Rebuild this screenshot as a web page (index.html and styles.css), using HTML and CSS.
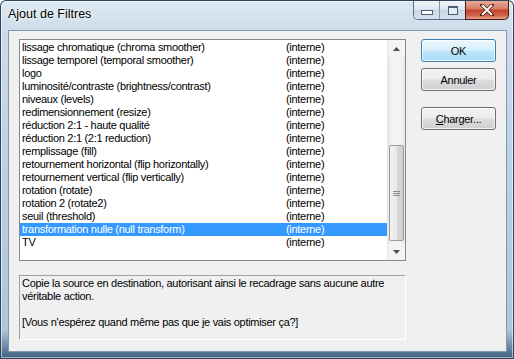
FILE: index.html
```
<!DOCTYPE html>
<html lang="fr">
<head>
    <meta charset="UTF-8">
    <title>Ajout de Filtres</title>
    <link rel="stylesheet" href="styles.css">
</head>
<body>
    <div class="window">
        <div class="titlebar">
            <div class="title">Ajout de Filtres</div>
            <div class="caption-buttons">
                <div class="cap-group">
                    <div class="cap-btn cap-min"><span class="min-glyph"></span></div>
                    <div class="cap-btn cap-max"><span class="max-glyph"></span></div>
                </div>
                <div class="cap-close">
                    <svg width="14" height="12" viewBox="0 0 14 12">
                        <path d="M2 1 L12 11 M12 1 L2 11" stroke="#3d1a14" stroke-width="3.4" stroke-linecap="square"/>
                        <path d="M2 1 L12 11 M12 1 L2 11" stroke="#ffffff" stroke-width="2"/>
                    </svg>
                </div>
            </div>
        </div>

        <div class="client">
            <div class="main-col">
                <div class="listbox">
                    <div class="list-items">
                        <div class="row"><span class="name">lissage chromatique (chroma smoother)</span><span class="src">(interne)</span></div>
                        <div class="row"><span class="name">lissage temporel (temporal smoother)</span><span class="src">(interne)</span></div>
                        <div class="row"><span class="name">logo</span><span class="src">(interne)</span></div>
                        <div class="row"><span class="name">luminosité/contraste (brightness/contrast)</span><span class="src">(interne)</span></div>
                        <div class="row"><span class="name">niveaux (levels)</span><span class="src">(interne)</span></div>
                        <div class="row"><span class="name">redimensionnement (resize)</span><span class="src">(interne)</span></div>
                        <div class="row"><span class="name">réduction 2:1 - haute qualité</span><span class="src">(interne)</span></div>
                        <div class="row"><span class="name">réduction 2:1 (2:1 reduction)</span><span class="src">(interne)</span></div>
                        <div class="row"><span class="name">remplissage (fill)</span><span class="src">(interne)</span></div>
                        <div class="row"><span class="name">retournement horizontal (flip horizontally)</span><span class="src">(interne)</span></div>
                        <div class="row"><span class="name">retournement vertical (flip vertically)</span><span class="src">(interne)</span></div>
                        <div class="row"><span class="name">rotation (rotate)</span><span class="src">(interne)</span></div>
                        <div class="row"><span class="name">rotation 2 (rotate2)</span><span class="src">(interne)</span></div>
                        <div class="row"><span class="name">seuil (threshold)</span><span class="src">(interne)</span></div>
                        <div class="row selected"><span class="name">transformation nulle (null transform)</span><span class="src">(interne)</span></div>
                        <div class="row"><span class="name">TV</span><span class="src">(interne)</span></div>
                    </div>
                    <div class="scrollbar">
                        <div class="sb-arrow">
                            <svg width="7" height="4" viewBox="0 0 7 4"><path d="M0 4 L3.5 0 L7 4 Z" fill="#4d4d4d"/></svg>
                        </div>
                        <div class="sb-track">
                            <div class="sb-space"></div>
                            <div class="sb-thumb">
                                <svg width="7" height="7" viewBox="0 0 7 7">
                                    <path d="M0 1.5 H7 M0 3.5 H7 M0 5.5 H7" stroke="#8a8a8a" stroke-width="1"/>
                                </svg>
                            </div>
                        </div>
                        <div class="sb-arrow">
                            <svg width="7" height="4" viewBox="0 0 7 4"><path d="M0 0 L7 0 L3.5 4 Z" fill="#4d4d4d"/></svg>
                        </div>
                    </div>
                </div>

                <div class="description">
                    <p>Copie la source en destination, autorisant ainsi le recadrage sans aucune autre véritable action.</p>
                    <p>[Vous n'espérez quand même pas que je vais optimiser ça?]</p>
                </div>
            </div>

            <div class="button-col">
                <button class="btn btn-default">OK</button>
                <button class="btn">Annuler</button>
                <button class="btn btn-spaced"><u>C</u>harger...</button>
            </div>
        </div>
    </div>
</body>
</html>
```

FILE: styles.css
```
html, body {
    margin: 0;
    padding: 0;
    background: #ffffff;
}
body {
    font-family: "Liberation Sans", Arial, sans-serif;
    font-size: 11px;
    color: #000000;
}
.window {
    width: 514px;
    height: 359px;
    box-sizing: border-box;
    display: flex;
    flex-direction: column;
    padding: 0 7px 7px 8px;
    border-radius: 6px 6px 0 0;
    background: linear-gradient(to bottom, #dde8f2 0%, #cbdbea 10%, #bfd2e5 40%, #aec5dc 92%, #3c5c80 100%);
    box-shadow: inset 0 0 0 1px #31465d, inset 0 0 0 2px rgba(255, 255, 255, 0.55);
}
.titlebar {
    height: 30px;
    display: flex;
    justify-content: space-between;
    align-items: flex-start;
}
.title {
    font-size: 12.5px;
    padding-top: 7px;
    color: #000000;
    text-shadow: 0 0 6px #ffffff, 0 0 3px #ffffff;
}
.caption-buttons {
    display: flex;
    margin-top: 1px;
    margin-right: -2px;
}
.cap-group {
    display: flex;
    height: 18px;
    border: 1px solid #5a6d80;
    border-top: none;
    border-right: none;
    border-radius: 0 0 0 5px;
    overflow: hidden;
}
.cap-btn {
    width: 25px;
    height: 18px;
    display: flex;
    align-items: center;
    justify-content: center;
    background: linear-gradient(to bottom, #f0f5f9 0%, #dfe8f1 45%, #c9d8e7 50%, #d5e2ee 100%);
}
.cap-min {
    border-right: 1px solid #8496a8;
}
.min-glyph {
    width: 10px;
    height: 3px;
    margin-top: 5px;
    border: 1px solid #4e5f70;
    background: #ffffff;
}
.max-glyph {
    width: 8px;
    height: 6px;
    border: 1px solid #4e5f70;
    border-top-width: 2px;
    background: #e4ecf4;
}
.cap-close {
    width: 42px;
    height: 18px;
    display: flex;
    align-items: center;
    justify-content: center;
    border: 1px solid #4a1a12;
    border-top: none;
    border-radius: 0 0 5px 0;
    background: linear-gradient(to bottom, #e9a99a 0%, #d67a63 45%, #c2412a 50%, #d0644a 80%, #e3a08a 100%);
}
.client {
    flex: 1;
    display: flex;
    background: #f0f0f0;
    border: 1px solid #8497ab;
    padding: 8px 0 0 10px;
    letter-spacing: -0.3px;
}
.main-col {
    width: 387px;
    display: flex;
    flex-direction: column;
}
.listbox {
    height: 222px;
    box-sizing: border-box;
    display: flex;
    background: #ffffff;
    border: 1px solid #828790;
}
.list-items {
    flex: 1;
    padding-top: 1px;
}
.row {
    display: flex;
    height: 13px;
    line-height: 13px;
    padding-left: 2px;
    white-space: nowrap;
}
.row .name {
    width: 264px;
}
.row.selected {
    background: #3399ff;
    color: #ffffff;
}
.scrollbar {
    width: 17px;
    display: flex;
    flex-direction: column;
    background: #f3f3f3;
    border-left: 1px solid #e6e6e6;
}
.sb-arrow {
    height: 17px;
    display: flex;
    align-items: center;
    justify-content: center;
}
.sb-track {
    flex: 1;
    display: flex;
    flex-direction: column;
    background: linear-gradient(to right, #e8e8e8, #f5f5f5 30%, #f5f5f5 70%, #e8e8e8);
}
.sb-space {
    height: 88px;
}
.sb-thumb {
    height: 96px;
    margin: 0 1px;
    box-sizing: border-box;
    display: flex;
    align-items: center;
    justify-content: center;
    border: 1px solid #9b9b9b;
    border-radius: 2px;
    background: linear-gradient(to right, #f3f3f3 0%, #e9e9e9 50%, #d8d8d8 51%, #cfcfcf 100%);
}
.description {
    margin-top: 14px;
    height: 65px;
    box-sizing: border-box;
    padding: 1px 2px;
    border: 1px solid #a0a0a0;
    border-right-color: #ffffff;
    border-bottom-color: #ffffff;
    line-height: 13px;
}
.description p {
    margin: 0 0 13px 0;
}
.button-col {
    display: flex;
    flex-direction: column;
    margin-left: 15px;
}
.btn {
    width: 75px;
    height: 23px;
    margin-bottom: 6px;
    padding: 0;
    font-family: "Liberation Sans", Arial, sans-serif;
    font-size: 11px;
    letter-spacing: -0.3px;
    color: #000000;
    border: 1px solid #707070;
    border-radius: 3px;
    background: linear-gradient(to bottom, #f2f2f2 0%, #ebebeb 48%, #dddddd 52%, #cfcfcf 100%);
    box-shadow: inset 0 0 0 1px rgba(255, 255, 255, 0.7);
}
.btn-default {
    border-color: #3c7fb1;
    background: linear-gradient(to bottom, #eaf6fd 0%, #d9f0fc 48%, #bee6fd 52%, #a7d9f5 100%);
    box-shadow: inset 0 0 0 1px rgba(255, 255, 255, 0.8);
}
.btn-spaced {
    margin-top: 10px;
}
```
